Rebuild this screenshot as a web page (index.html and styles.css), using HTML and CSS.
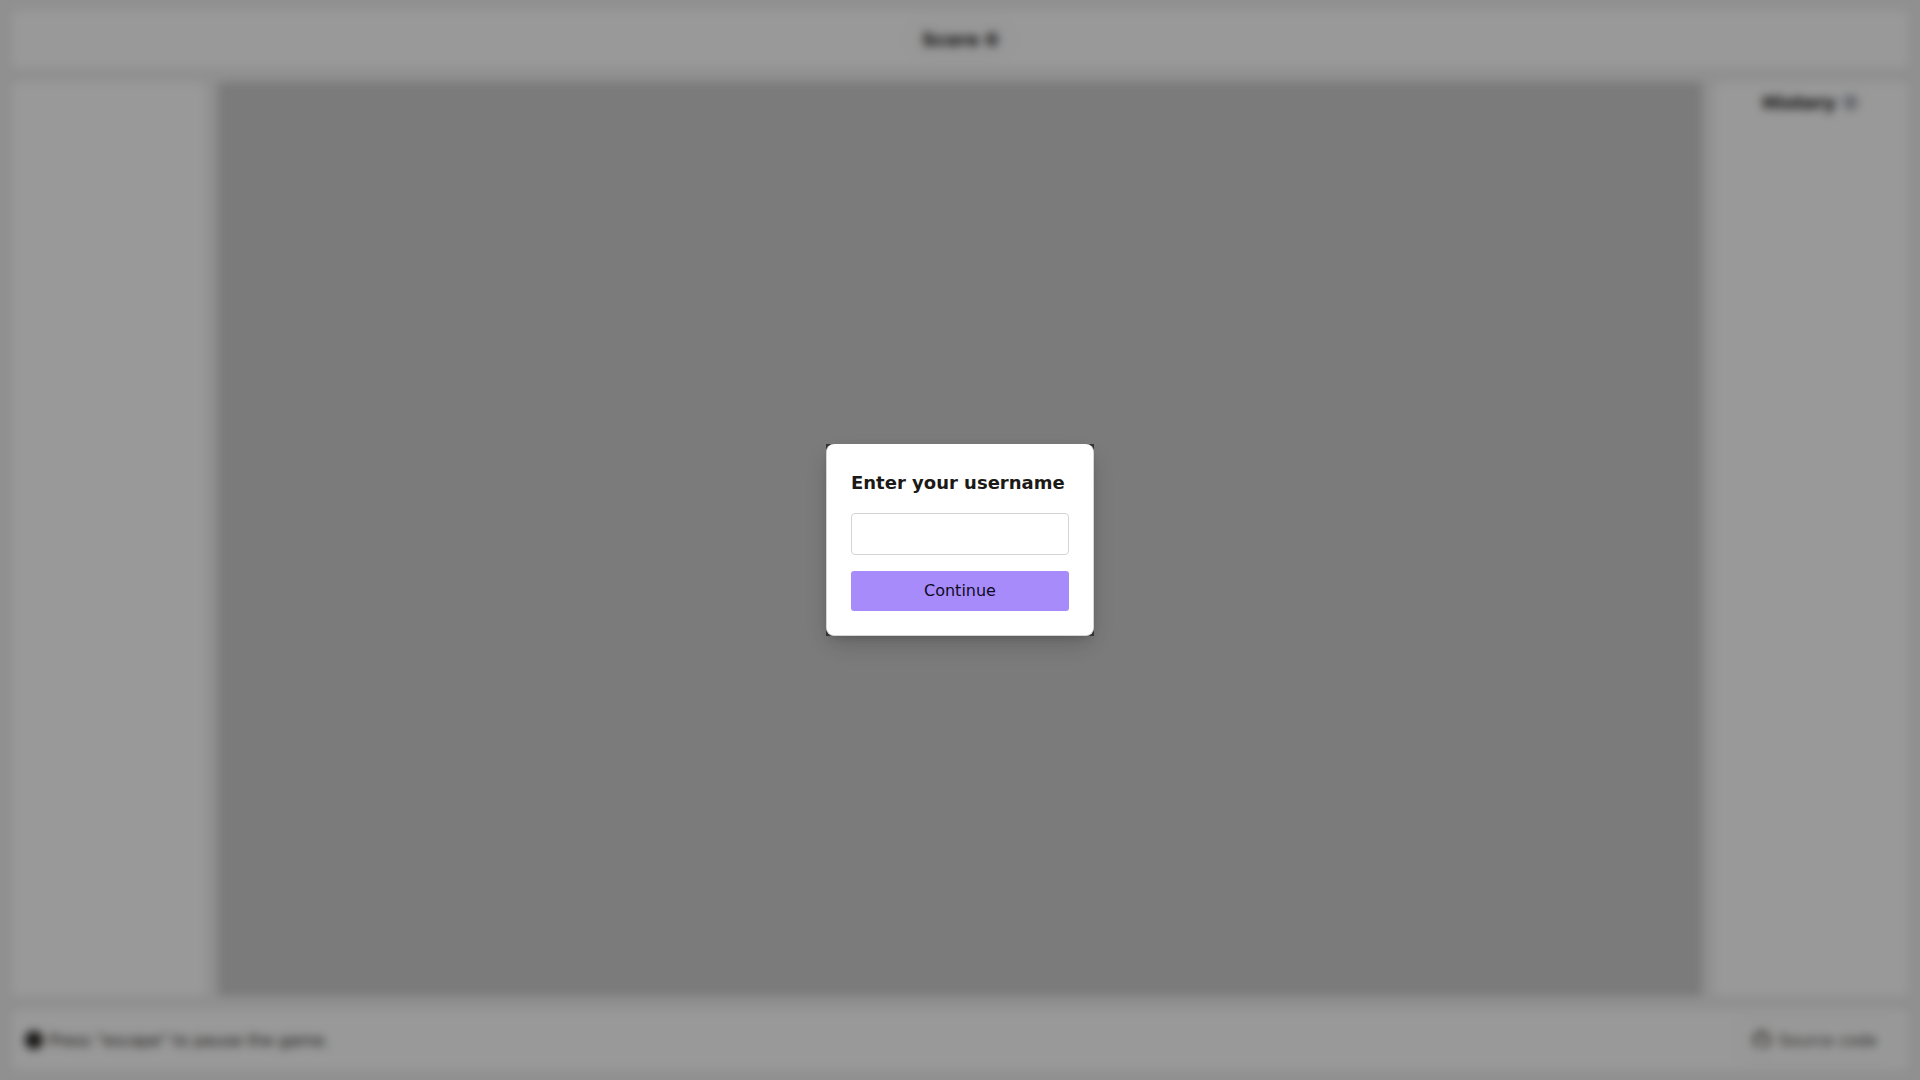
FILE: index.html
```html
<!DOCTYPE html>
<html lang="en">
<head>
  <meta charset="UTF-8" />
  <meta name="viewport" content="width=device-width, initial-scale=1.0" />
  <title>Game</title>
  <link rel="stylesheet" href="styles.css">
</head>
<body>
  <div class="app">
    <header class="panel top-bar">
      <div class="score">Score 0</div>
    </header>

    <main class="middle">
      <aside class="panel side-left"></aside>
      <div class="game-canvas"></div>
      <aside class="panel side-right">
        <h2 class="history-title">
          History
          <svg class="info-icon" viewBox="0 0 24 24" width="15" height="15" fill="#c4c8d0" stroke="#6b7280" stroke-width="2.4">
            <circle cx="12" cy="12" r="10"/>
            <path d="M12 11v6M12 7v1"/>
          </svg>
        </h2>
      </aside>
    </main>

    <footer class="panel bottom-bar">
      <div class="hint">
        <svg viewBox="0 0 24 24" width="20" height="20" fill="#292524">
          <circle cx="12" cy="12" r="11"/>
        </svg>
        <span>Press "escape" to pause the game.</span>
      </div>
      <a class="source-link" href="#">
        <svg viewBox="0 0 24 24" width="20" height="20" fill="#57534e">
          <path d="M12 1a11 11 0 0 0-3.500 21.400c.6.100.8-.2.8-.5v-2c-3 .7-3.700-1.300-3.700-1.300-.5-1.300-1.200-1.600-1.200-1.600-1-.7.1-.7.1-.7 1.100.1 1.700 1.100 1.700 1.100 1 1.700 2.600 1.200 3.200.9.100-.7.400-1.200.7-1.500-2.400-.3-5-1.200-5-5.400 0-1.200.4-2.200 1.100-2.900-.1-.3-.5-1.400.1-2.900 0 0 .9-.3 3 1.100a10 10 0 0 1 5.400 0c2.100-1.400 3-1.100 3-1.100.6 1.500.2 2.600.1 2.900.7.7 1.100 1.700 1.100 2.900 0 4.200-2.600 5.100-5 5.400.4.300.7 1 .7 2v3c0 .3.2.6.8.5A11 11 0 0 0 12 1z"/>
        </svg>
        <span>Source code</span>
      </a>
    </footer>
  </div>

  <div class="overlay">
    <div class="modal-shell">
      <form class="modal">
        <h1 class="modal-title">Enter your username</h1>
        <input class="modal-input" type="text" />
        <button class="modal-btn" type="button">Continue</button>
      </form>
    </div>
  </div>
</body>
</html>
```

FILE: styles.css
```css
* {
  box-sizing: border-box;
}
html, body {
  height: 100%;
}
body {
  margin: 0;
  font-family: "DejaVu Sans", sans-serif;
  background: #f0f0f0;
  color: #0c0a09;
  overflow: hidden;
}
.app {
  height: 100%;
  padding: 10px 12px;
  display: flex;
  flex-direction: column;
  gap: 14px;
}
.panel {
  background: #fff;
  border-radius: 8px;
}
.top-bar {
  height: 58px;
  display: flex;
  align-items: center;
  justify-content: center;
}
.score {
  font-size: 18px;
  font-weight: bold;
  padding: 6px 14px;
  border: 1px solid #e2e2e2;
  border-radius: 20px;
}
.middle {
  flex: 1;
  display: flex;
  gap: 12px;
  min-height: 0;
}
.side-left, .side-right {
  width: 194px;
}
.side-right {
  padding-top: 10px;
}
.game-canvas {
  flex: 1;
  background: #cdcdcd;
}
.history-title {
  margin: 0;
  padding-right: 2px;
  font-size: 18px;
  font-weight: bold;
  display: flex;
  align-items: center;
  justify-content: center;
  gap: 7px;
}
.bottom-bar {
  height: 60px;
  padding: 0 14px 0 12px;
  display: flex;
  align-items: center;
  justify-content: space-between;
}
.hint {
  display: flex;
  align-items: center;
  gap: 5px;
  font-size: 16px;
  color: #292524;
}
.source-link {
  display: flex;
  align-items: center;
  gap: 6px;
  padding: 10px 16px 10px 12px;
  font-size: 16px;
  color: #44403c;
  text-decoration: none;
  border: 1px solid #e2e2e2;
  border-radius: 8px;
}
.overlay {
  position: fixed;
  inset: 0;
  background: rgba(0, 0, 0, 0.4);
  backdrop-filter: blur(5px);
  display: flex;
  align-items: center;
  justify-content: center;
}
.modal-shell {
  width: 268px;
  height: 192px;
  margin-bottom: 1px;
  background: #333;
  box-shadow: 0 10px 25px -3px rgba(0, 0, 0, 0.2), 0 4px 10px -4px rgba(0, 0, 0, 0.2);
}
.modal {
  height: 100%;
  padding: 25px 24px 24px;
  background: #fff;
  border: 1px solid #d6d6d6;
  border-width: 0 1px 1px 1px;
  border-radius: 8px;
  display: flex;
  flex-direction: column;
}
.modal-title {
  margin: 0 0 17px;
  font-size: 18px;
  line-height: 27px;
  font-weight: bold;
  white-space: nowrap;
  color: #1c1917;
}
.modal-input {
  height: 42px;
  width: 100%;
  margin-bottom: 16px;
  padding: 0 10px;
  border: 1px solid #d4d4d8;
  border-radius: 4px;
  background: #fff;
  outline: none;
}
.modal-btn {
  height: 40px;
  width: 100%;
  border: none;
  border-radius: 3px;
  background: #a78bfa;
  color: #0f0a1e;
  font-family: inherit;
  font-size: 16px;
  cursor: pointer;
}
```
